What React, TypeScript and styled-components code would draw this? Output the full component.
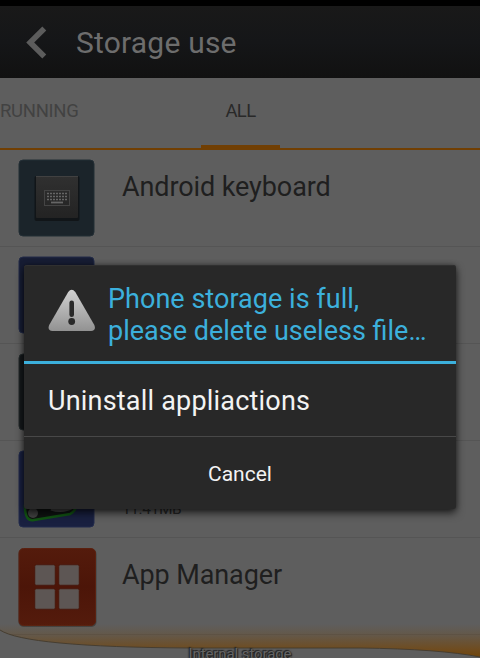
import React from "react";
import styled, { createGlobalStyle } from "styled-components";

const GlobalStyle = createGlobalStyle`
  * { box-sizing: border-box; }
  html, body { margin: 0; padding: 0; background: #5e5e5e; }
  body { font-family: Roboto, "Noto Sans", sans-serif; overflow: hidden; }
`;

const Screen = styled.div`
  position: relative;
  width: 480px;
  height: 658px;
  overflow: hidden;
  background: #5e5e5e;
  display: flex;
  flex-direction: column;
`;

const StatusStrip = styled.div`
  flex: none;
  height: 6px;
  background: #000;
`;

const ActionBar = styled.header`
  flex: none;
  height: 72px;
  display: flex;
  align-items: center;
  padding-left: 26px;
  background: linear-gradient(#191919, #151618 50%, #111);
`;

const BackIcon = styled.svg`
  width: 21px;
  height: 33px;
  margin-right: 29px;
`;

const Title = styled.h1`
  margin: 2px 0 0;
  font-size: 30px;
  line-height: 40px;
  font-weight: 400;
  letter-spacing: 0.2px;
  color: #6d6d6d;
  white-space: nowrap;
`;

const TabBar = styled.nav`
  flex: none;
  height: 72px;
  display: flex;
  border-bottom: 2px solid #713f03;
`;

const Tab = styled.div<{ $active?: boolean; $width: number }>`
  position: relative;
  width: ${(p) => p.$width}px;
  height: 70px;
  line-height: 66px;
  font-size: 18.5px;
  letter-spacing: ${(p) => (p.$active ? "-0.6px" : "-0.3px")};
  text-align: ${(p) => (p.$active ? "center" : "left")};
  color: ${(p) => (p.$active ? "#292929" : "#424242")};
  border-bottom: ${(p) => (p.$active ? "3px solid #713f03" : "none")};
`;

const List = styled.main`
  flex: 1;
  min-height: 0;
  overflow: hidden;
`;

const Row = styled.div`
  height: 97px;
  display: flex;
  padding: 9px 0 0 18px;
  border-bottom: 1px solid #555;
`;

const RowIcon = styled.svg`
  flex: none;
  width: 80px;
  height: 84px;
  margin-right: 24px;
`;

const RowText = styled.div`
  display: flex;
  flex-direction: column;
  justify-content: space-between;
  height: 78px;
`;

const RowName = styled.div`
  margin-top: 10px;
  font-size: 27px;
  line-height: 36px;
  letter-spacing: -0.1px;
  color: #1f1f1f;
  white-space: nowrap;
`;

const RowSize = styled.div`
  font-size: 15.5px;
  line-height: 18px;
  letter-spacing: -0.4px;
  margin-bottom: 10px;
  color: #262626;
`;

const EdgeGlow = styled.svg`
  position: absolute;
  left: 0;
  bottom: 0;
  width: 480px;
  height: 34px;
`;

const StorageLabel = styled.div`
  position: absolute;
  top: 645px;
  left: 0;
  width: 480px;
  text-align: center;
  font-size: 15px;
  line-height: 18px;
  letter-spacing: -0.1px;
  color: #656565;
  text-shadow: 0 0 2px #222, 1px 1px 1px #222, -1px -1px 1px #222;
`;

const Dialog = styled.section`
  position: absolute;
  left: 24px;
  top: 265px;
  width: 432px;
  height: 244px;
  display: flex;
  flex-direction: column;
  background: #282828;
  border-radius: 3px;
  box-shadow: 0 4px 9px rgba(0, 0, 0, 0.65), 0 0 5px rgba(0, 0, 0, 0.35), inset 0 1px 0 #303030;
`;

const DialogHead = styled.div`
  height: 99px;
  display: flex;
  padding: 18px 0 0 24px;
  border-bottom: 3px solid #3cb0dc;
`;

const WarningIcon = styled.svg`
  width: 48px;
  height: 44px;
  margin: 6px 12px 0 0;
`;

const DialogTitle = styled.h2`
  margin: 0;
  font-size: 27px;
  line-height: 32px;
  font-weight: 400;
  color: #3cb0dc;
  white-space: nowrap;
`;

const TitleLine = styled.span<{ $spacing: number }>`
  display: block;
  letter-spacing: ${(p) => p.$spacing}px;
`;

const DialogOption = styled.div`
  height: 73px;
  padding-left: 24px;
  font-size: 27px;
  line-height: 75px;
  letter-spacing: 0.2px;
  color: #f3f3f3;
  border-bottom: 1px solid #484848;
`;

const DialogButton = styled.button`
  flex: 1;
  border: 0;
  padding: 2px 0 0;
  background: transparent;
  font: 400 21px/30px Roboto, sans-serif;
  color: #f3f3f3;
`;

const KeyboardIcon = () => (
  <RowIcon viewBox="0 0 80 84">
    <defs>
      <linearGradient id="keycap" x2="0" y2="1">
        <stop offset="0" stopColor="#303030" />
        <stop offset="1" stopColor="#232323" />
      </linearGradient>
    </defs>
    <rect x="1" y="1" width="75" height="76" rx="4" fill="#1b242a" stroke="#232e35" />
    <rect x="16.5" y="17" width="45" height="45" rx="2" fill="#111518" />
    <rect x="18" y="17" width="42" height="42" rx="1" fill="url(#keycap)" />
    <path d="M18 17.5h42" stroke="#414141" />
    <rect x="26.5" y="31.5" width="25" height="15" fill="none" stroke="#444" />
    <path d="M29 34.5h20M29 37.5h20M29 40.5h20" stroke="#666" strokeWidth="1.7" strokeDasharray="2 1" />
    <path d="M33 43.5h12" stroke="#666" strokeWidth="1.8" />
  </RowIcon>
);

const PlainIcon = ({ fill, stroke }: { fill: string; stroke: string }) => (
  <RowIcon viewBox="0 0 80 84">
    <rect x="1" y="1" width="75" height="76" rx="4" fill={fill} stroke={stroke} />
  </RowIcon>
);

const GameIcon = () => (
  <RowIcon viewBox="0 0 80 84">
    <rect x="1" y="1" width="75" height="76" rx="4" fill="#192040" stroke="#222b4c" />
    <path d="M7 56Q7 72 16 70L52 64Q59 60 59 52Z" fill="#101412" stroke="#125514" strokeWidth="2.5" />
    <ellipse cx="15" cy="63" rx="5" ry="5" fill="#434343" />
    <path d="M33 59Q45 63 55 57" stroke="#444" strokeWidth="3" fill="none" />
  </RowIcon>
);

const ManagerIcon = () => (
  <RowIcon viewBox="0 0 80 84">
    <defs>
      <linearGradient id="managerFill" x2="0" y2="1">
        <stop offset="0" stopColor="#541b0c" />
        <stop offset=".5" stopColor="#4c1508" />
        <stop offset="1" stopColor="#541b0c" />
      </linearGradient>
    </defs>
    <rect x="0.5" y="2" width="78" height="78" rx="5" fill="#333" opacity=".65" />
    <rect x="1" y="1.5" width="76.5" height="77" rx="4.5" fill="url(#managerFill)" stroke="#5a2110" />
    <g fill="#5d5654" stroke="#431408" strokeWidth=".7">
      <rect x="16.8" y="17.8" width="20.4" height="20.4" rx="1.5" />
      <rect x="40.8" y="17.8" width="20.4" height="20.4" rx="1.5" />
      <rect x="16.8" y="41.8" width="20.4" height="20.4" rx="1.5" />
      <rect x="40.8" y="41.8" width="20.4" height="20.4" rx="1.5" />
    </g>
  </RowIcon>
);

export default function App() {
  return (
    <>
      <GlobalStyle />
      <Screen>
        <StatusStrip />
        <ActionBar>
          <BackIcon viewBox="0 0 21 33">
            <path d="M18.3 2.5L4.2 16.5L18.3 30.5" fill="none" stroke="#5c5c5c" strokeWidth="5.6" />
          </BackIcon>
          <Title>Storage use</Title>
        </ActionBar>
        <TabBar>
          <Tab $width={201}>RUNNING</Tab>
          <Tab $width={79} $active>ALL</Tab>
        </TabBar>
        <List>
          <Row>
            <KeyboardIcon />
            <RowText><RowName>Android keyboard</RowName></RowText>
          </Row>
          <Row><PlainIcon fill="#171d34" stroke="#222b48" /></Row>
          <Row><PlainIcon fill="#15191b" stroke="#252b2d" /></Row>
          <Row>
            <GameIcon />
            <RowText><span /><RowSize>11.41MB</RowSize></RowText>
          </Row>
          <Row>
            <ManagerIcon />
            <RowText><RowName>App Manager</RowName></RowText>
          </Row>
        </List>
        <EdgeGlow viewBox="0 0 480 34">
          <defs>
            <linearGradient id="glow" x2="0" y2="34" gradientUnits="userSpaceOnUse">
              <stop offset="0" stopColor="#704b1c" stopOpacity="0" />
              <stop offset=".35" stopColor="#704b1c" stopOpacity=".35" />
              <stop offset=".75" stopColor="#704b1c" stopOpacity=".95" />
              <stop offset="1" stopColor="#704408" />
            </linearGradient>
          </defs>
          <path d="M0 0H480V33Q440 25 360 24H190Q25 23 0 6Z" fill="url(#glow)" />
          <path d="M0 6Q25 23 190 24H360Q440 25 480 33V34H0Z" fill="#5e5e5e" />
          <path d="M0 6Q25 23 190 24H360Q440 25 480 33" fill="none" stroke="#443a2b" strokeWidth=".9" />
        </EdgeGlow>
        <StorageLabel>Internal storage</StorageLabel>
        <Dialog role="dialog">
          <DialogHead>
            <WarningIcon viewBox="0 0 48 44">
              <defs>
                <linearGradient id="warning" x2="0" y2="1">
                  <stop offset="0" stopColor="#d2d2d2" />
                  <stop offset="1" stopColor="#929292" />
                </linearGradient>
              </defs>
              <path d="M20.2 3Q23.7-1.6 27.3 3L46.3 36Q48.5 41.8 43 42H4.5Q-1 41.7 1.2 36Z" fill="url(#warning)" />
              <rect x="21.4" y="11.5" width="4.6" height="16.5" rx="2.3" fill="#292929" />
              <circle cx="23.7" cy="32.5" r="3.4" fill="#292929" />
            </WarningIcon>
            <DialogTitle>
              <TitleLine $spacing={0.03}>Phone storage is full,</TitleLine>
              <TitleLine $spacing={0}>please delete useless file…</TitleLine>
            </DialogTitle>
          </DialogHead>
          <DialogOption>Uninstall appliactions</DialogOption>
          <DialogButton>Cancel</DialogButton>
        </Dialog>
      </Screen>
    </>
  );
}
